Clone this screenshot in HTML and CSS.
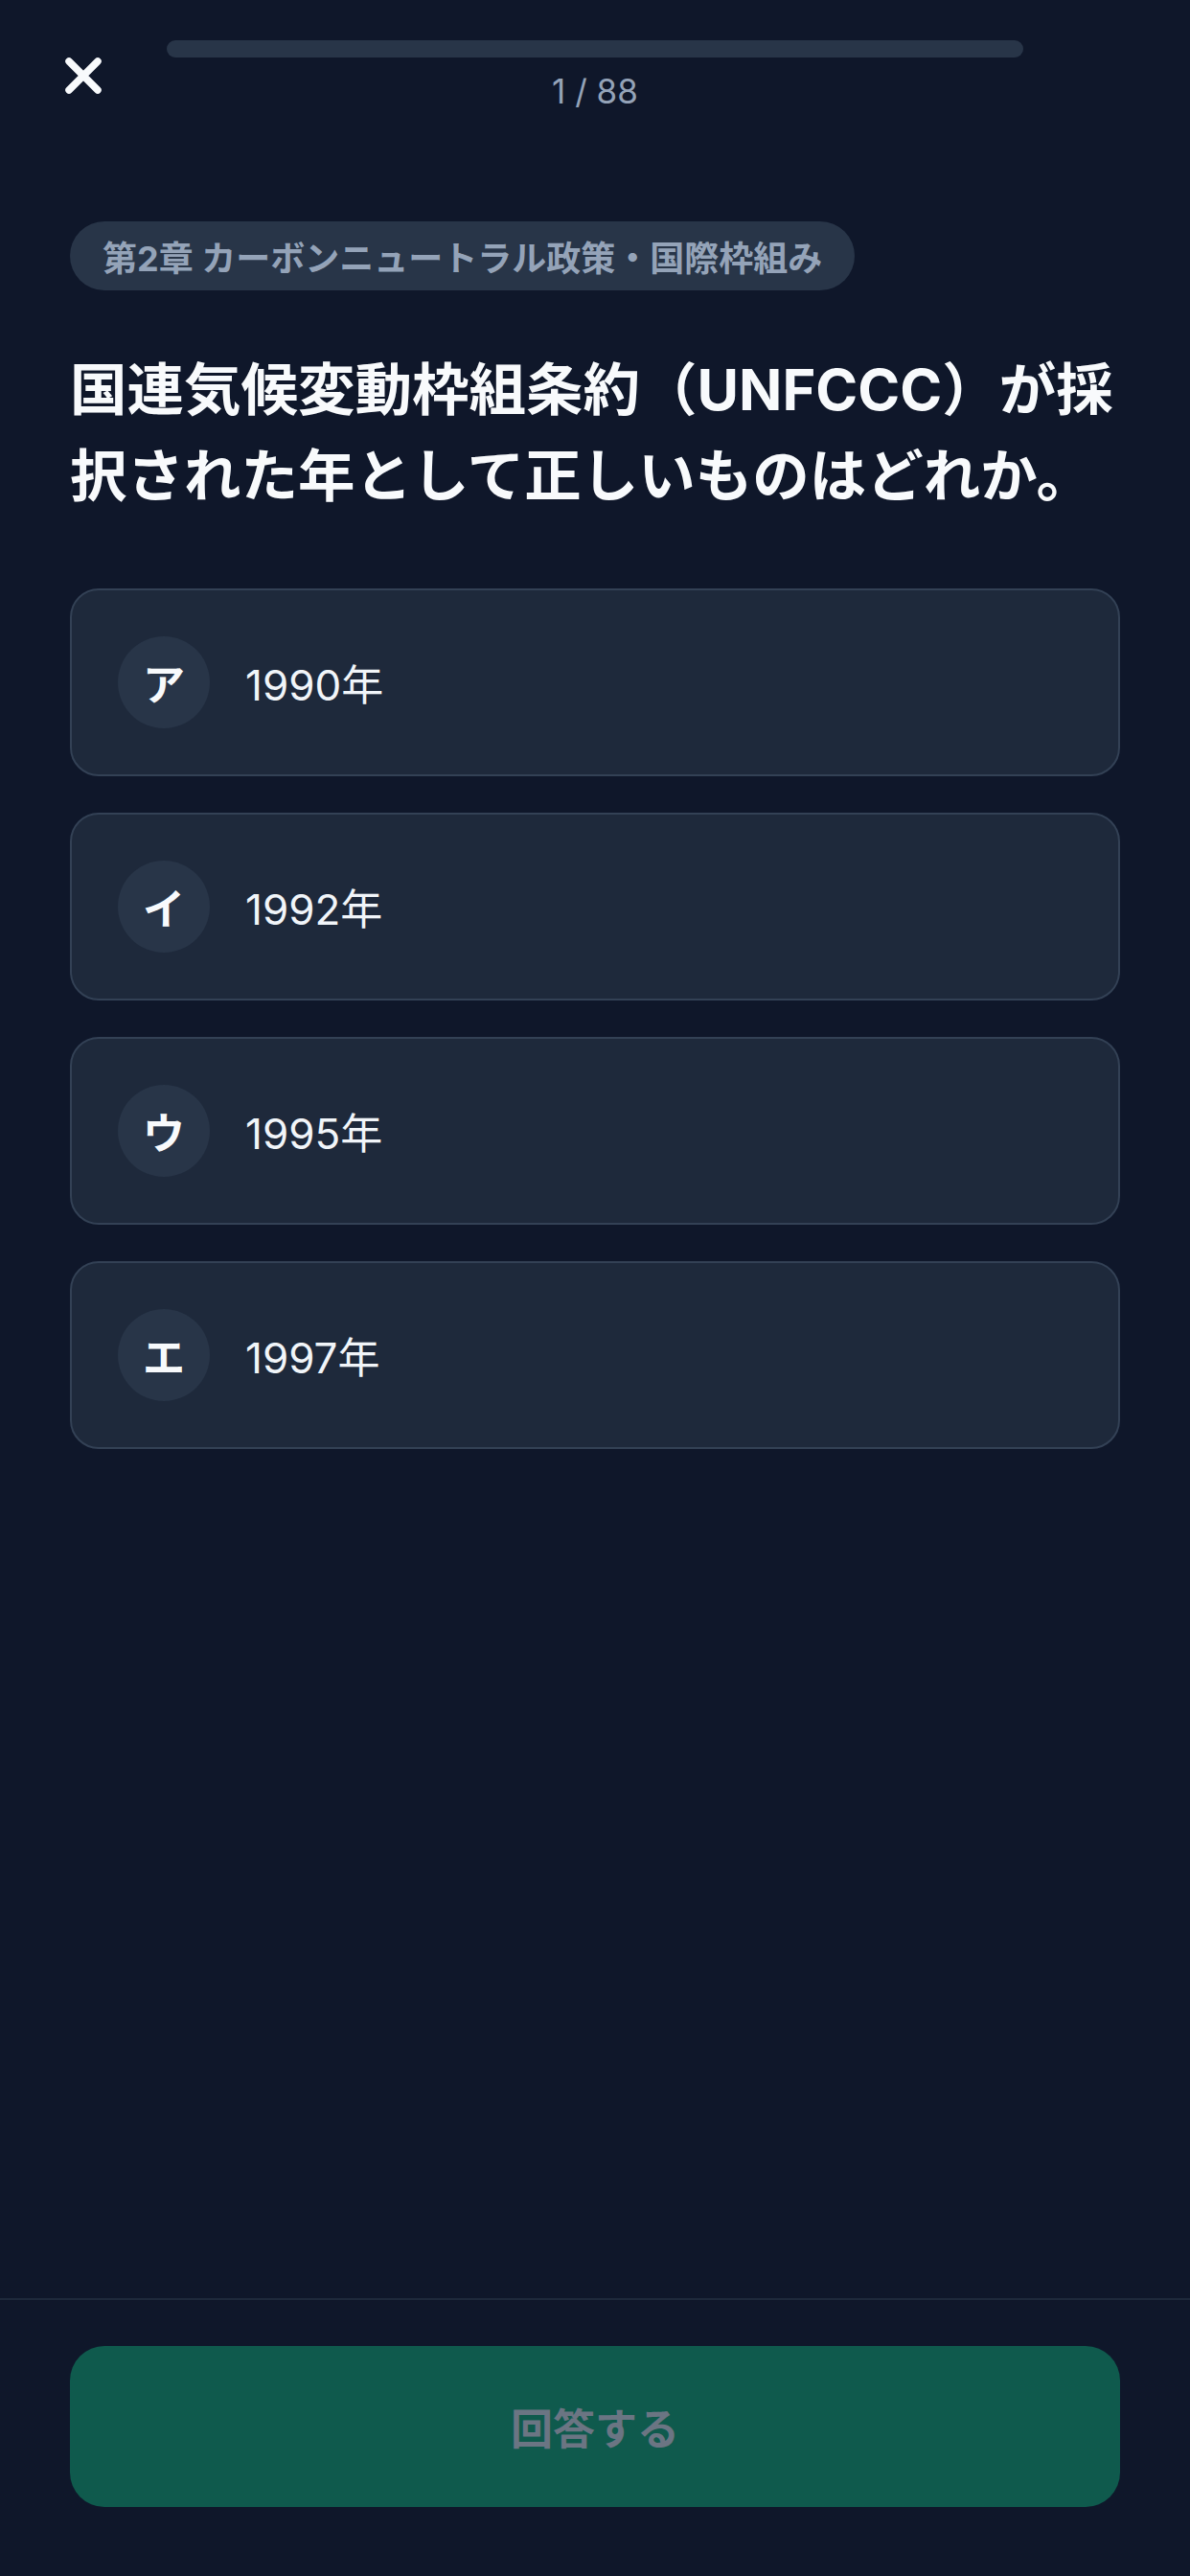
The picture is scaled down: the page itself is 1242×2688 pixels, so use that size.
FILE: index.html
```html
<!DOCTYPE html>
<html lang="ja">
<head>
<meta charset="utf-8">
<title>Quiz</title>
<link rel="stylesheet" href="styles.css">
</head>
<body>
<div class="screen">
  <header class="header">
    <button class="close" aria-label="閉じる">
      <svg viewBox="0 0 44 44" width="44" height="44"><path d="M7 7 L37 37 M37 7 L7 37" stroke="#f8fafc" stroke-width="7.5" stroke-linecap="round" fill="none"/></svg>
    </button>
    <div class="progress">
      <div class="bar"><div class="fill" style="width:0%"></div></div>
      <div class="counter">1 / 88</div>
    </div>
    <div class="spacer"></div>
  </header>

  <main class="content">
    <div class="chip">第2章 カーボンニュートラル政策・国際枠組み</div>
    <h1 class="question">国連気候変動枠組条約（UNFCCC）が採択された年として正しいものはどれか。</h1>
    <div class="options">
      <div class="option"><span class="label">ア</span><span class="text">1990年</span></div>
      <div class="option"><span class="label">イ</span><span class="text">1992年</span></div>
      <div class="option"><span class="label">ウ</span><span class="text">1995年</span></div>
      <div class="option"><span class="label">エ</span><span class="text">1997年</span></div>
    </div>
  </main>

  <footer class="footer">
    <button class="submit">回答する</button>
  </footer>
</div>
</body>
</html>
```
FILE: styles.css
```css
* { box-sizing: border-box; }
html, body {
  margin: 0;
  padding: 0;
  background: #0f172a;
}
body {
  font-family: Inter, "Noto Sans CJK JP", sans-serif;
  color: #f8fafc;
}
.screen {
  width: 1242px;
  height: 2688px;
  display: flex;
  flex-direction: column;
}
.header {
  display: grid;
  grid-template-columns: 174px 1fr 174px;
  align-items: center;
  padding-top: 42px;
}
.close {
  justify-self: center;
  width: 44px;
  height: 44px;
  padding: 0;
  margin: 0;
  border: 0;
  background: none;
  display: flex;
  align-items: center;
  justify-content: center;
}
.close svg { display: block; }
.progress {
  display: flex;
  flex-direction: column;
  align-items: center;
  gap: 14px;
}
.bar {
  width: 100%;
  height: 18px;
  border-radius: 9px;
  background: #283548;
  overflow: hidden;
}
.fill {
  height: 100%;
  background: #10b981;
}
.counter {
  font-size: 35px;
  line-height: 42px;
  color: #94a3b8;
}
.content {
  flex: 1;
  padding: 115px 73px 0;
  display: flex;
  flex-direction: column;
  align-items: flex-start;
}
.chip {
  height: 72px;
  display: inline-flex;
  align-items: center;
  padding: 0 34px;
  border-radius: 36px;
  background: #283548;
  color: #94a3b8;
  font-size: 36px;
  font-weight: 700;
  white-space: nowrap;
}
.question {
  margin: 58px 0 0;
  font-size: 59.5px;
  line-height: 90px;
  font-weight: 700;
  color: #f8fafc;
}
.options {
  align-self: stretch;
  margin-top: 73px;
  display: flex;
  flex-direction: column;
  gap: 38px;
}
.option {
  display: flex;
  align-items: center;
  gap: 37px;
  padding: 48px;
  border: 2px solid #334155;
  border-radius: 30px;
  background: #1e293b;
}
.label {
  width: 96px;
  height: 96px;
  flex: none;
  border-radius: 50%;
  background: #283548;
  display: flex;
  align-items: center;
  justify-content: center;
  font-size: 44px;
  font-weight: 700;
  color: #f8fafc;
}
.text {
  font-size: 44px;
  color: #f1f5f9;
}
.footer {
  border-top: 2px solid #1e293b;
  padding: 48px 73px 72px;
}
.submit {
  width: 100%;
  height: 168px;
  border: 0;
  border-radius: 36px;
  background: #0f5a4d;
  color: #6b7583;
  font-family: Inter, "Noto Sans CJK JP", sans-serif;
  font-size: 44px;
  font-weight: 700;
}
```
